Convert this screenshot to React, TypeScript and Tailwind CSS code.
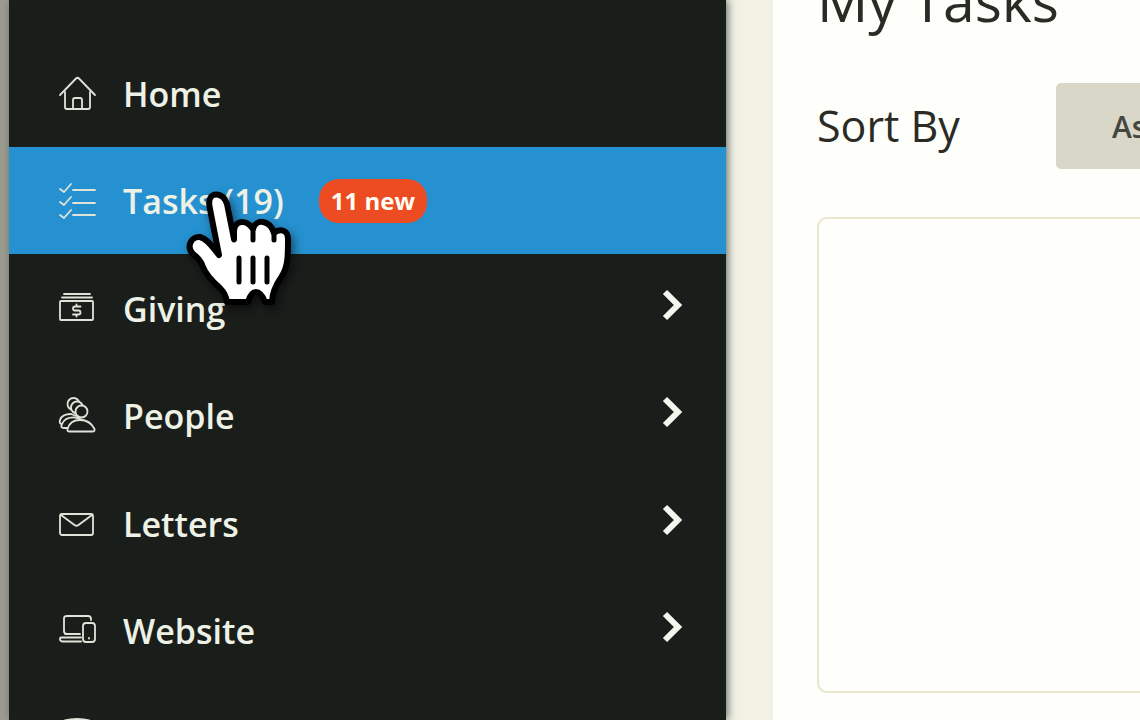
import type { ReactNode } from "react";

const HomeIcon = () => (
  <>
    <path d="M1 20 17 3.500Q18.500 2 20 3.500L36 20" />
    <path d="M6 17V32Q6 34 8 34H29Q31 34 31 32V17" />
    <path d="M14 34V25Q14 23 16 23H21Q23 23 23 25V34" />
  </>
);

const TasksIcon = () => (
  <>
    <path d="M1 7 5 10 12 2M1 20 5 23 12 15M1 33 5 36 12 28" />
    <path d="M14 8H36M14 21H36M14 33H36" />
  </>
);

const GivingIcon = () => (
  <>
    <path d="M5 4H31M3 7.500H33" />
    <rect x="1" y="11" width="33" height="19" rx="1" />
    <path d="M21.500 16.500H16Q14 16.500 14 18.500T16 20.500H19.500Q21.500 20.500 21.500 22.500T19.500 24.500H14M17.500 14.500V16.500M17.500 24.500V26.500" />
  </>
);

const PeopleIcon = () => (
  <g className="fill-[#1a1e1b]">
    <path d="M3 27Q0 27 1 23Q3 17 12 17L20 20 8 27Z" />
    <circle cx="14.500" cy="7" r="6" />
    <path d="M5 31Q1 31 3 27Q6 20 16 20.500L24 23 10 31Z" />
    <circle cx="18" cy="10.500" r="6" />
    <path d="M10 34.500Q8 34.500 8.500 32Q11 23 21 23T35.500 32Q36 34.500 34 34.500Z" />
    <circle cx="22.500" cy="14.500" r="6" />
  </g>
);

const LettersIcon = () => (
  <>
    <rect x="1" y="9" width="33" height="21" rx="2" />
    <path d="M2 10 15.500 20Q17.500 21.500 19.500 20L33 10" />
  </>
);

const WebsiteIcon = () => (
  <>
    <path d="M8 22Q5 22 5 19V6Q5 4 8 4H29Q32 4 32 7V8M6 22H21" />
    <path d="M22 25.500H2Q1 25.500 1 27Q1 29.500 4 29.500H22" />
    <rect x="24" y="11" width="12" height="19" rx="3" />
    <path d="M30 26V26.500" />
  </>
);

const DatabaseIcon = () => (
  <>
    <ellipse cx="18" cy="4" rx="17" ry="5" />
    <path d="M1 4V30Q4 35 18 35T35 30V4" />
  </>
);

type Item = {
  label: string;
  icon: ReactNode;
  badge?: string;
  active?: boolean;
  expandable?: boolean;
};

const items: Item[] = [
  { label: "Home", icon: <HomeIcon /> },
  { label: "Tasks (19)", icon: <TasksIcon />, badge: "11 new", active: true },
  { label: "Giving", icon: <GivingIcon />, expandable: true },
  { label: "People", icon: <PeopleIcon />, expandable: true },
  { label: "Letters", icon: <LettersIcon />, expandable: true },
  { label: "Website", icon: <WebsiteIcon />, expandable: true },
  { label: "Data", icon: <DatabaseIcon />, expandable: true },
];

function NavItem({ item }: { item: Item }) {
  return (
    <li className="even:mb-px">
      <a
        href="#"
        className={`flex h-[107px] items-center pr-[43px] pl-[50px] ${item.active ? "bg-[#2691d0]" : ""}`}
      >
        <svg
          viewBox="0 0 38 38"
          className="mr-[26px] size-[38px] shrink-0 overflow-visible fill-none stroke-[#e0e4d8] stroke-[1.8]"
          strokeLinecap="round"
          strokeLinejoin="round"
          aria-hidden="true"
        >
          {item.icon}
        </svg>
        <span className="text-[34px] leading-[44px] font-semibold whitespace-nowrap">{item.label}</span>
        {item.badge && (
          <span className="ml-[35px] flex h-11 items-center rounded-[20px] bg-[#ed4b22] px-3 text-2xl font-bold whitespace-nowrap text-[#fffdf2]">
            {item.badge}
          </span>
        )}
        {item.expandable && (
          <svg
            viewBox="0 0 22 32"
            className="mb-2 ml-auto h-8 w-[22px] fill-none stroke-[#f4f6ee] stroke-[6]"
            aria-hidden="true"
          >
            <path d="M4 3 17 16 4 29" />
          </svg>
        )}
      </a>
    </li>
  );
}

function HandPointer() {
  return (
    <svg
      viewBox="0 0 110 118"
      className="pointer-events-none absolute top-[190px] left-[185px] z-20 h-[118px] w-[110px] overflow-visible drop-shadow-[3px_5px_5px_rgba(0,0,0,0.5)]"
      strokeLinejoin="round"
      strokeLinecap="round"
      aria-hidden="true"
    >
      <path
        className="fill-white stroke-black stroke-[6]"
        d="M34 65 25 19C22 7 28 4 32 4.500C37 5 40 8 42 14L49 49V44C48 30 61 28 68 39C71 28 85 30 89 43C95 38 103 40 103 49C103 66 103 76 97 86C90 96 87 103 87 112H80Q76 102 71 102T63 112H42Q41 104 35 98C27 91 21 85 18 77Q16 70 8 64C1 57 6 46 15 47C23 49 28 58 34 65Z"
      />
      <path className="fill-none stroke-black stroke-[5]" d="M49 49V50M68 39V50M89 43V50M54 68V92M68 68V92M82 68V92" />
    </svg>
  );
}

export default function App() {
  return (
    <div className="relative flex h-screen overflow-hidden bg-[#9d9c90] pl-[9px] font-['Open_Sans',sans-serif]">
      <nav
        aria-label="Main"
        className="z-10 w-[717px] shrink-0 bg-[#1a1e1b] pt-10 text-[#eef2e6] shadow-[2px_0_8px_rgba(50,60,60,0.7)]"
      >
        <ul>
          {items.map((item) => (
            <NavItem key={item.label} item={item} />
          ))}
        </ul>
      </nav>
      <div className="flex min-w-0 flex-1 bg-[#f1f2e4] pl-[47px]">
        <main className="flex min-w-0 flex-1 flex-col overflow-hidden bg-[#fefefb] pl-11 text-[#2b2b26]">
          <h1 className="-mt-10 text-[57px] leading-[80px] whitespace-nowrap">My Tasks</h1>
          <div className="mt-[43px] flex items-center">
            <span className="w-[239px] shrink-0 text-[43px] leading-[60px]">Sort By</span>
            <button
              type="button"
              className="h-[86px] shrink-0 rounded-[5px] bg-[#d8d7c8] px-14 text-[30px] font-semibold text-[#464640]"
            >
              Assigned
            </button>
          </div>
          <section
            aria-label="Task list"
            className="mt-12 -mr-4 h-[476px] shrink-0 rounded-[10px] border-2 border-[#e8e6cc]"
          />
        </main>
      </div>
      <HandPointer />
    </div>
  );
}
